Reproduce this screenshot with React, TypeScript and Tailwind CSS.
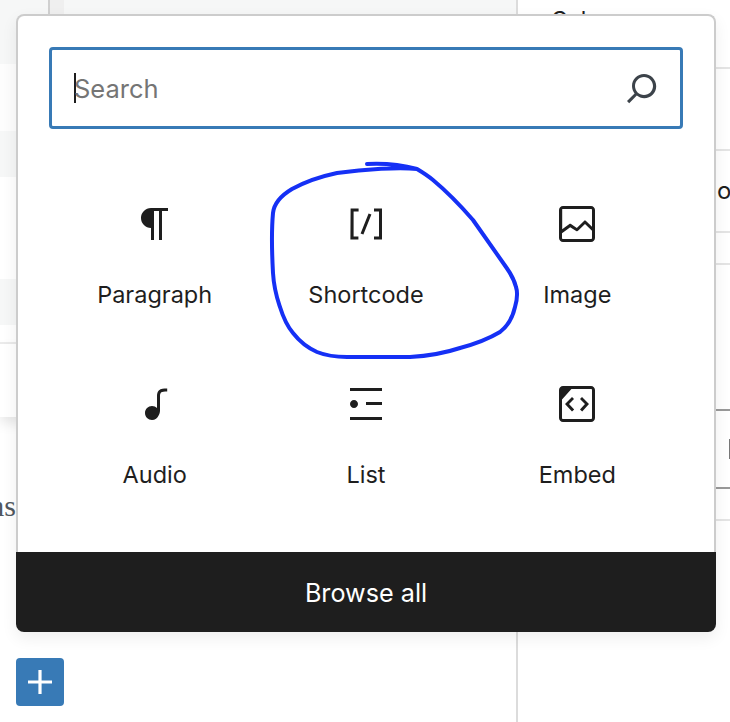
import React from "react";

const blocks = [
  { label: "Paragraph", d: "m9.99609 14v-.2251l.00391.0001v6.225h1.5v-14.5h2.5v14.5h1.5v-14.5h3v-1.5h-8.50391c-2.76142 0-5 2.23858-5 5 0 2.7614 2.23858 5 5 5z" },
  { label: "Shortcode", d: "M16 4.2v1.5h2.5v12.5H16v1.5h4V4.2h-4zM4.2 19.8h4v-1.5H5.8V5.8h2.5V4.2h-4l-.1 15.6zm5.1-3.1l1.4.6 4-10-1.4-.6-4 10z" },
  { label: "Image", d: "M19 3H5c-1.1 0-2 .9-2 2v14c0 1.1.9 2 2 2h14c1.1 0 2-.9 2-2V5c0-1.1-.9-2-2-2zM5 4.5h14c.3 0 .5.2.5.5v8.4l-3-2.9c-.3-.3-.8-.3-1 0L11.9 14 9 12c-.3-.2-.6-.2-.8 0l-3.6 2.6V5c-.1-.3.1-.5.4-.5zm14 15H5c-.3 0-.5-.2-.5-.5v-2.4l4.1-3 3 1.9c.3.2.7.2.9-.1L16 12l3.5 3.4V19c0 .3-.2.5-.5.5z" },
  { label: "Audio", d: "M17.7 4.3c-1.2 0-2.8 0-3.8 1-.6.6-.9 1.5-.9 2.6V14c-.6-.6-1.5-1-2.5-1C8.6 13 7 14.6 7 16.5S8.6 20 10.5 20c1.5 0 2.8-1 3.3-2.3.5-.8.7-1.8.7-2.5V7.9c0-.7.2-1.2.5-1.6.6-.6 1.8-.6 2.8-.6h.3V4.3h-.4z" },
  { label: "List", d: "M4 4v1.5h16V4H4zm8 8.5h8V11h-8v1.5zM4 20h16v-1.5H4V20zm4-8c0-1.1-.9-2-2-2s-2 .9-2 2 .9 2 2 2 2-.9 2-2z" },
  { label: "Embed", d: "M19 3H5c-1.105 0-2 .895-2 2v14c0 1.105.895 2 2 2h14c1.105 0 2-.895 2-2V5c0-1.105-.895-2-2-2zm.5 16c0 .276-.224.5-.5.5H5c-.276 0-.5-.224-.5-.5V9.8l4.7-5.3H19c.276 0 .5.224.5.5v14zm-6-9.5L16 12l-2.5 2.8 1.1 1L18 12l-3.5-3.5-1 1zm-3 0l-1-1L6 12l3.5 3.8 1.1-1L8 12l2.5-2.5z" }
];

// hand-drawn circle round the Shortcode block
const scribble =
  "M367 164 C385 163 402 165 417 169 C400 167 365 169 337 173 C318 177 303 183 292 189 C282 195 274 203 273 213 C271 235 272 255 273 273 C274 290 277 298 280 307 C284 320 288 327 293 333 C300 342 308 348 317 352 C327 356 335 357 347 357 L410 357 C428 356 445 353 460 348 C475 344 490 338 500 332 C509 325 513 316 515 307 C517 300 518 293 516 287 C514 279 511 274 506 267 L473 220 C460 205 445 190 433 180 C427 175 422 172 417 169";

export default function App() {
  return (
    <div className="relative h-[722px] w-[730px] overflow-hidden bg-white font-['Inter',sans-serif] text-[#1e1e1e]">
      {/* Page behind the inserter */}
      <div className="flex h-full">
        <div className="flex w-[518px] flex-col border-r-2 border-[#dcdcdc]">
          <div className="flex h-[64px] bg-[#f6f7f7]">
            <div className="h-full w-[50px] border-r-2 border-[#d0d0d0]" />
            <div className="h-full w-[14px] bg-[#efefef]" />
          </div>
          <div className="h-[67px] bg-[#fdfdfd]" />
          <div className="h-[46px] bg-[#f6f7f7]" />
          <div className="h-[102px] bg-white" />
          <div className="h-[46px] bg-[#f6f7f7]" />
          <div className="h-[19px] border-b-2 border-[#ececec] bg-white" />
          <div className="h-[73px] bg-white shadow-[0_6px_12px_rgba(0,0,0,0.1)]" />
          <div className="mt-[68px] flex h-[40px] w-[16px] items-center justify-end overflow-hidden">
            <span className="font-['Liberation_Serif',serif] text-[30px] text-[#50575e]">ns</span>
          </div>
          <button className="ml-[16px] mt-[133px] flex h-[48px] w-[48px] items-center justify-center rounded-[4px] bg-[#387ab6]">
            <svg width="48" height="48" viewBox="0 0 24 24" fill="#ffffff">
              <path d="M18 11.2h-5.2V6h-1.6v5.2H6v1.6h5.2V18h1.6v-5.2H18z" />
            </svg>
          </button>
        </div>
        <div className="flex flex-1 flex-col overflow-hidden">
          <div className="h-[69px] border-b-2 border-[#e4e4e4] pl-[33px] pt-[4px] text-[23px] leading-[32px]">Cal</div>
          <div className="h-[82px] border-b-2 border-[#e4e4e4]" />
          <div className="flex h-[82px] items-center border-b-2 border-[#e4e4e4] pl-[199px] text-[24px] whitespace-nowrap">
            o
          </div>
          <div className="h-[32px] border-b-2 border-[#e4e4e4]" />
          <div className="h-[146px] border-b-2 border-[#999999]" />
          <div className="flex h-[78px] items-center border-b-2 border-[#999999] pl-[211px]">
            <div className="h-[20px] w-[1px] bg-[#777777]" />
          </div>
          <div className="h-[32px] border-b-2 border-[#e4e4e4]" />
        </div>
      </div>

      {/* Block inserter popover */}
      <div className="absolute left-[16px] top-[14px] flex h-[618px] w-[700px] flex-col rounded-[8px] shadow-[0_6px_16px_rgba(0,0,0,0.07)]">
        <div className="h-[538px] rounded-t-[8px] border-2 border-b-0 border-[#cccccc] bg-white px-[31px] pt-[31px]">
          <div className="flex h-[82px] items-center rounded-[4px] border-[3px] border-[#387ab6] pl-[22px] pr-[14px]">
            <span className="-mr-[2px] h-[30px] w-[2px] shrink-0 bg-[#1e1e1e]" />
            <input
              placeholder="Search"
              className="min-w-0 flex-1 bg-transparent pt-[2px] text-[25.5px] text-[#1e1e1e] outline-none placeholder:text-[#757575]"
            />
            <svg width="48" height="48" viewBox="0 0 24 24" fill="#3c434a">
              <path d="M13 5c-3.3 0-6 2.7-6 6 0 1.4.5 2.7 1.3 3.7l-3.8 3.8 1.1 1.1 3.8-3.8c1 .8 2.3 1.3 3.7 1.3 3.3 0 6-2.7 6-6S16.3 5 13 5zm0 10.5c-2.5 0-4.5-2-4.5-4.5s2-4.5 4.5-4.5 4.5 2 4.5 4.5-2 4.5-4.5 4.5z" />
            </svg>
          </div>
          <div className="mt-[71px] grid grid-cols-3 gap-y-[69px]">
            {blocks.map(b => (
              <div key={b.label} className="flex h-[111px] flex-col items-center">
                <svg width="48" height="48" viewBox="0 0 24 24" fill="#1e1e1e">
                  <path d={b.d} />
                </svg>
                <span className="mt-[31px] text-[23.5px] leading-[32px]">{b.label}</span>
              </div>
            ))}
          </div>
        </div>
        <div className="flex h-[80px] items-center justify-center rounded-b-[8px] bg-[#1e1e1e] pt-[3px] text-[25.2px] text-white">
          Browse all
        </div>
      </div>

      {/* Annotation drawn over the screenshot */}
      <svg className="pointer-events-none absolute left-0 top-0" width="730" height="722" viewBox="0 0 730 722" fill="none">
        <path d={scribble} stroke="#1530f5" strokeWidth="4" strokeLinecap="round" strokeLinejoin="round" />
      </svg>
    </div>
  );
}
